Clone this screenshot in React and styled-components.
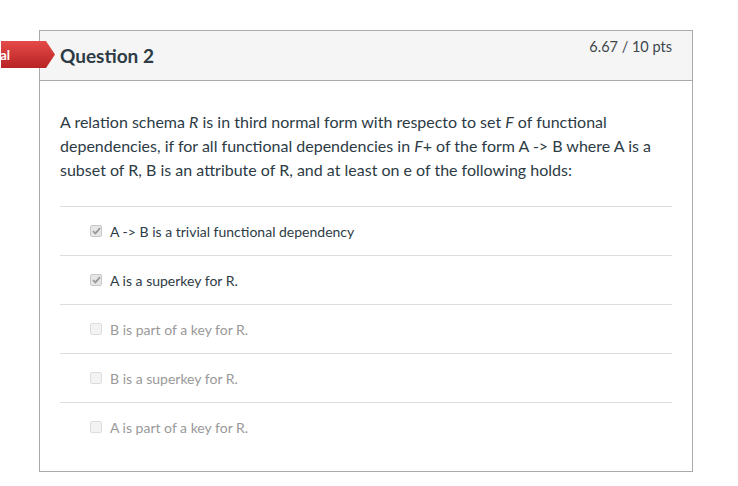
import React from "react";
import styled, { createGlobalStyle } from "styled-components";

const GlobalStyle = createGlobalStyle`
  html, body {
    margin: 0;
    padding: 0;
    background: #fff;
  }
  body {
    font-family: Lato, "Open Sans", "Liberation Sans", sans-serif;
    color: #2d3b45;
  }
`;

const Page = styled.div`
  width: 738px;
  height: 486px;
  padding: 30px 0 0 39px;
  box-sizing: border-box;
  overflow: hidden;
  position: relative;
`;

const QuestionCard = styled.div`
  position: relative;
  width: 654px;
  box-sizing: border-box;
  border: 1px solid #aaa;
`;

const Header = styled.div`
  display: flex;
  justify-content: space-between;
  align-items: flex-start;
  height: 50px;
  box-sizing: border-box;
  background: #f5f5f5;
  border-bottom: 1px solid #aaa;
  padding: 0 20px 0 20px;
`;

const Title = styled.h2`
  margin: 14px 0 0;
  font-size: 19px;
  font-weight: 700;
  line-height: 22px;
  color: #2d3b45;
`;

const Points = styled.div`
  margin-top: 7px;
  font-size: 14.5px;
  font-weight: 400;
  color: #3d454c;
  line-height: 18px;
`;

const ResultTag = styled.div`
  position: absolute;
  left: -39px;
  top: 10px;
  width: 54px;
  height: 27px;
  display: flex;
  align-items: center;
  justify-content: flex-end;
  padding-right: 45px;
  box-sizing: border-box;
  color: #fff;
  font-size: 13px;
  font-weight: 700;
  background: linear-gradient(#e64a4a, #b82323);
  clip-path: polygon(0 0, 45px 0, 54px 50%, 45px 100%, 0 100%);
`;

const Body = styled.div`
  padding: 29px 20px 20px;
`;

const QuestionText = styled.p`
  margin: 0 0 24px;
  font-size: 16px;
  line-height: 24px;
  color: #2d3b45;
`;

const Answers = styled.div`
  display: flex;
  flex-direction: column;
`;

const AnswerRow = styled.label`
  display: flex;
  align-items: center;
  gap: 8px;
  height: 49px;
  box-sizing: border-box;
  padding-left: 30px;
  border-top: 1px solid #ddd;
  font-size: 14px;
  color: ${(p) => (p.$checked ? "#2d3b45" : "#999")};
`;

const Box = styled.span`
  width: 12px;
  height: 12px;
  box-sizing: border-box;
  border: 1px solid ${(p) => (p.$checked ? "#c8c8c8" : "#ddd")};
  border-radius: 2px;
  background: ${(p) => (p.$checked ? "#e6e6e6" : "#f3f3f3")};
  display: flex;
  align-items: center;
  justify-content: center;
`;

const answers = [
  { text: "A -> B is a trivial functional dependency", checked: true },
  { text: "A is a superkey for R.", checked: true },
  { text: "B is part of a key for R.", checked: false },
  { text: "B is a superkey for R.", checked: false },
  { text: "A is part of a key for R.", checked: false },
];

function Check() {
  return (
    <svg width="9" height="8" viewBox="0 0 9 8">
      <path d="M1 4.2 L3.4 6.4 L8 1.2" fill="none" stroke="#999" strokeWidth="1.8" />
    </svg>
  );
}

export default function App() {
  return (
    <>
      <GlobalStyle />
      <Page>
        <QuestionCard>
          <ResultTag>al</ResultTag>
          <Header>
            <Title>Question 2</Title>
            <Points>6.67 / 10 pts</Points>
          </Header>
          <Body>
            <QuestionText>
              A relation schema <i>R</i> is in third normal form with respecto to set <i>F</i> of functional
              dependencies, if for all functional dependencies in <i>F</i>+ of the form A -&gt; B where A is a
              subset of R, B is an attribute of R, and at least on e of the following holds:
            </QuestionText>
            <Answers>
              {answers.map((a) => (
                <AnswerRow key={a.text} $checked={a.checked}>
                  <Box $checked={a.checked}>{a.checked && <Check />}</Box>
                  {a.text}
                </AnswerRow>
              ))}
            </Answers>
          </Body>
        </QuestionCard>
      </Page>
    </>
  );
}
